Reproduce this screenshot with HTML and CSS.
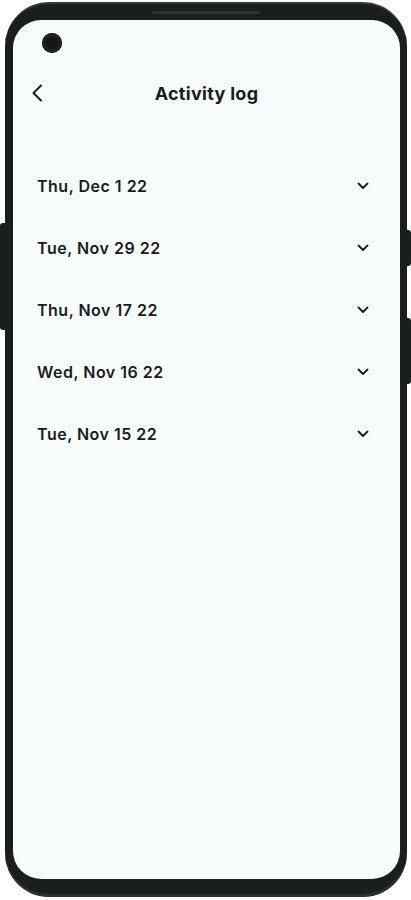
FILE: index.html
```html
<!DOCTYPE html>
<html lang="en">
<head>
  <meta charset="UTF-8">
  <meta name="viewport" content="width=device-width, initial-scale=1.0">
  <title>Activity log</title>
  <link rel="stylesheet" href="styles.css">
</head>
<body>

  <div class="phone">
    <div class="side-btn left-btn"></div>
    <div class="side-btn right-btn top"></div>
    <div class="side-btn right-btn bottom"></div>
    <div class="speaker"></div>

    <div class="screen">
      <div class="camera"></div>

      <div class="header">
        <button class="back" aria-label="Back">
          <svg width="12" height="18" viewBox="0 0 12 18">
            <path d="M10 1.5 L2.5 9 L10 16.5" fill="none" stroke="#1a1c1c" stroke-width="2" stroke-linecap="round" stroke-linejoin="round"/>
          </svg>
        </button>
        <h1 class="title">Activity log</h1>
      </div>

      <ul class="days">
        <li class="day"><span>Thu, Dec 1 22</span><svg class="chev" width="12" height="8" viewBox="0 0 12 8"><path d="M1.5 1.5 L6 6 L10.5 1.5" fill="none" stroke="#1a1c1c" stroke-width="1.8" stroke-linecap="round" stroke-linejoin="round"/></svg></li>
        <li class="day"><span>Tue, Nov 29 22</span><svg class="chev" width="12" height="8" viewBox="0 0 12 8"><path d="M1.5 1.5 L6 6 L10.5 1.5" fill="none" stroke="#1a1c1c" stroke-width="1.8" stroke-linecap="round" stroke-linejoin="round"/></svg></li>
        <li class="day"><span>Thu, Nov 17 22</span><svg class="chev" width="12" height="8" viewBox="0 0 12 8"><path d="M1.5 1.5 L6 6 L10.5 1.5" fill="none" stroke="#1a1c1c" stroke-width="1.8" stroke-linecap="round" stroke-linejoin="round"/></svg></li>
        <li class="day"><span>Wed, Nov 16 22</span><svg class="chev" width="12" height="8" viewBox="0 0 12 8"><path d="M1.5 1.5 L6 6 L10.5 1.5" fill="none" stroke="#1a1c1c" stroke-width="1.8" stroke-linecap="round" stroke-linejoin="round"/></svg></li>
        <li class="day"><span>Tue, Nov 15 22</span><svg class="chev" width="12" height="8" viewBox="0 0 12 8"><path d="M1.5 1.5 L6 6 L10.5 1.5" fill="none" stroke="#1a1c1c" stroke-width="1.8" stroke-linecap="round" stroke-linejoin="round"/></svg></li>
      </ul>
    </div>
  </div>

</body>
</html>
```

FILE: styles.css
```css
body {
  margin: 0;
  background: #ffffff;
  font-family: Inter, "Noto Sans", sans-serif;
  color: #1a1c1c;
}

.phone {
  position: relative;
  box-sizing: border-box;
  width: 402px;
  height: 895px;
  margin: 2px 0 0 5px;
  padding: 16px 7px 18px 8px;
  border-radius: 44px;
  background: #1b1e1e;
  border-top: 2px solid #343c3a;
  box-shadow: inset 0 -3px 0 #2a3130;
}

.side-btn {
  position: absolute;
  width: 5px;
  background: #1b1e1e;
}

.left-btn {
  left: -5px;
  top: 219px;
  height: 107px;
  border-radius: 3px 0 0 3px;
}

.right-btn {
  right: -4px;
  width: 4px;
  border-radius: 0 3px 3px 0;
}

.right-btn.top {
  top: 226px;
  height: 36px;
}

.right-btn.bottom {
  top: 314px;
  height: 66px;
}

.speaker {
  position: absolute;
  top: 7px;
  left: 147px;
  width: 108px;
  height: 3px;
  border-radius: 2px;
  background: #2c3432;
}

.screen {
  position: relative;
  height: 100%;
  border-radius: 28px;
  background: #f6fbfb;
  overflow: hidden;
}

.camera {
  position: absolute;
  top: 13px;
  left: 29px;
  width: 20px;
  height: 20px;
  border-radius: 50%;
  background: #141616;
  box-shadow: inset 0 0 0 4px #1e2121;
}

.header {
  position: relative;
  display: flex;
  justify-content: center;
  align-items: center;
  height: 50px;
  margin-top: 48px;
}

.back {
  position: absolute;
  left: 18px;
  top: 16px;
  padding: 0;
  border: none;
  background: none;
}

.title {
  margin: 0;
  font-size: 18px;
  font-weight: 700;
  letter-spacing: 0.3px;
}

.days {
  list-style: none;
  margin: 37px 0 0;
  padding: 0;
}

.day {
  display: flex;
  justify-content: space-between;
  align-items: center;
  height: 62px;
  padding: 0 31px 0 24px;
  font-size: 16px;
  font-weight: 600;
  letter-spacing: 0.5px;
}
```
